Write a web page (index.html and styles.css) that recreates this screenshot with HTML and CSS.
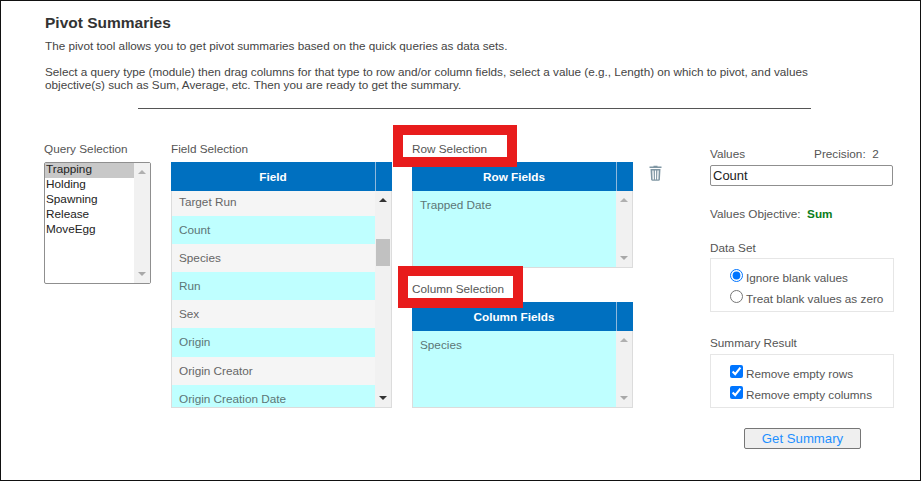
FILE: index.html
```html
<!DOCTYPE html>
<html lang="en">
<head>
<meta charset="utf-8">
<title>Pivot Summaries</title>
<link rel="stylesheet" href="styles.css">
</head>
<body>
<main class="frame">
  <section class="intro">
    <h1 class="title">Pivot Summaries</h1>
    <p class="text lead">The pivot tool allows you to get pivot summaries based on the quick queries as data sets.</p>
    <p class="text">Select a query type (module) then drag columns for that type to row and/or column fields, select a value (e.g., Length) on which to pivot, and values<br>objective(s) such as Sum, Average, etc. Then you are ready to get the summary.</p>
    <div class="rule"></div>
  </section>

  <section class="columns">
    <div class="col-query">
      <div class="label">Query Selection</div>
      <div class="listbox">
        <div class="listbox-items">
          <div class="option selected">Trapping</div>
          <div class="option">Holding</div>
          <div class="option">Spawning</div>
          <div class="option">Release</div>
          <div class="option">MoveEgg</div>
        </div>
        <div class="scrollbar">
          <span class="arrow up faint"></span>
          <span class="arrow down faint"></span>
        </div>
      </div>
    </div>

    <div class="col-field">
      <div class="label">Field Selection</div>
      <div class="panel">
        <div class="panel-head"><div class="head-title">Field</div><div class="head-end"></div></div>
        <div class="panel-body tall">
          <div class="rows">
            <div class="row grey">Target Run</div>
            <div class="row cyan">Count</div>
            <div class="row grey">Species</div>
            <div class="row cyan">Run</div>
            <div class="row grey">Sex</div>
            <div class="row cyan">Origin</div>
            <div class="row grey">Origin Creator</div>
            <div class="row cyan">Origin Creation Date</div>
          </div>
          <div class="scrollbar field-bar">
            <span class="arrow up"></span>
            <span class="thumb"></span>
            <span class="arrow down"></span>
          </div>
        </div>
      </div>
    </div>

    <div class="col-drop">
      <div class="label">Row Selection</div>
      <div class="panel">
        <div class="panel-head"><div class="head-title">Row Fields</div><div class="head-end"></div></div>
        <div class="panel-body short">
          <div class="drop-area">Trapped Date</div>
          <div class="scrollbar"><span class="arrow up faint"></span><span class="arrow down faint"></span></div>
        </div>
      </div>
      <div class="label second">Column Selection</div>
      <div class="panel">
        <div class="panel-head"><div class="head-title">Column Fields</div><div class="head-end"></div></div>
        <div class="panel-body short">
          <div class="drop-area">Species</div>
          <div class="scrollbar"><span class="arrow up faint"></span><span class="arrow down faint"></span></div>
        </div>
      </div>
      <div class="callout callout-row"></div>
      <div class="callout callout-col"></div>
    </div>

    <div class="col-trash">
      <svg class="trash" width="13" height="16" viewBox="0 0 13 16" aria-label="Delete">
        <path d="M4.500 1.600V.7h4v.9h4v1.500H.5V1.600z" fill="#7f96a3"/>
        <path d="M1.500 4h10l-.6 10.600c0 .8-.5 1.200-1.200 1.200H3.300c-.7 0-1.200-.4-1.200-1.200zM3.300 5.500l.3 8.900h1.300L4.600 5.500zM5.900 5.500v8.900h1.200V5.500zM8.400 5.500l-.3 8.900h1.300l.3-8.900z" fill="#7f96a3" fill-rule="evenodd"/>
      </svg>
    </div>

    <div class="col-right">
      <div class="values-head"><span>Values</span><span>Precision:&nbsp; 2</span></div>
      <input class="value-input" type="text" value="Count">
      <div class="objective">Values Objective:&nbsp; <b class="sum">Sum</b></div>
      <div class="label-r data-label">Data Set</div>
      <div class="optbox">
        <label class="opt"><input type="radio" name="ds" checked><span>Ignore blank values</span></label>
        <label class="opt"><input type="radio" name="ds"><span>Treat blank values as zero</span></label>
      </div>
      <div class="label-r summary-label">Summary Result</div>
      <div class="optbox">
        <label class="opt"><input type="checkbox" checked><span>Remove empty rows</span></label>
        <label class="opt"><input type="checkbox" checked><span>Remove empty columns</span></label>
      </div>
      <div class="actions"><button class="summary-btn" type="button">Get Summary</button></div>
    </div>
  </section>
</main>
</body>
</html>
```
FILE: styles.css
```css
* { box-sizing: border-box; }
html, body { margin: 0; padding: 0; background: #fff; }
body { font-family: "Liberation Sans", Arial, sans-serif; font-size: 11.750px; color: #555; }

.frame {
  width: 921px;
  height: 481px;
  border: 1px solid #111;
  padding: 13px 0 0 43px;
  overflow: hidden;
}

.intro { padding-left: 1px; }
.title { margin: 0 0 7px; font-size: 15.500px; line-height: 18px; font-weight: bold; color: #333; }
.text { margin: 0; font-size: 11.720px; line-height: 13px; color: #444; }
.lead { margin-bottom: 13px; }
.rule { width: 673px; height: 1px; margin: 17px 0 0 93px; background: #555; }

.columns { display: flex; align-items: flex-start; margin-top: 33px; }

.label { height: 20px; line-height: 14px; color: #555; }
.col-query { width: 107px; margin-right: 20px; }
.col-field { width: 221px; margin-right: 20px; }
.col-drop { position: relative; width: 221px; margin-right: 16px; }
.col-trash { width: 13px; padding-top: 23px; margin-right: 48px; }
.col-right { width: 184px; padding-top: 5px; }
.trash { display: block; }

.listbox {
  display: flex;
  height: 122px;
  border: 1px solid #8f8f8f;
  border-radius: 2px;
  background: #fff;
}
.listbox-items { flex: 1; }
.option { height: 15px; line-height: 12px; padding-left: 1px; color: #222; }
.selected { background: #c8c8c8; }

.scrollbar {
  display: flex;
  flex-direction: column;
  justify-content: space-between;
  align-items: center;
  width: 16px;
  padding: 7px 0;
  background: #f1f1f1;
  flex: none;
}
.arrow { width: 0; height: 0; border-left: 4px solid transparent; border-right: 4px solid transparent; }
.arrow.up { border-bottom: 4px solid #333; }
.arrow.down { border-top: 4px solid #333; }
.arrow.up.faint { border-bottom-color: #b0b0b0; }
.arrow.down.faint { border-top-color: #a8a8a8; }
.field-bar { position: relative; }
.thumb { position: absolute; left: 1px; top: 48px; width: 14px; height: 27px; background: #c1c1c1; }

.panel { border: 1px solid #dcdcdc; border-top: 0; }
.panel-head { display: flex; height: 29px; margin: 0 -1px; background: #0070c0; color: #fff; font-weight: bold; }
.head-title { flex: 1; text-align: center; line-height: 30px; border-right: 1px solid #8fb8dc; }
.head-end { width: 16px; }
.panel-body { display: flex; overflow: hidden; }
.tall { height: 216px; }
.short { height: 76px; }
.rows { flex: 1; margin-top: -3px; }
.row { height: 28.100px; line-height: 28px; padding-left: 7px; color: #666; }
.grey { background: #f5f5f5; }
.cyan { background: #bfffff; color: #5c7676; }
.drop-area { flex: 1; padding: 7px 0 0 7px; line-height: 14px; background: #bfffff; color: #5c7676; }

.second { margin-top: 14px; }
.callout { position: absolute; border: 10px solid #e81c1c; pointer-events: none; }
.callout-row { left: -19px; top: -17px; width: 124px; height: 42px; }
.callout-col { left: -14px; top: 124px; width: 125px; height: 42px; }

.values-head { display: flex; height: 14px; line-height: 14px; }
.values-head span:last-child { margin-left: 69px; }
.value-input {
  display: block;
  width: 183px;
  height: 21px;
  margin-top: 4px;
  padding: 0 2px;
  border: 1px solid #8f8f8f;
  border-radius: 2px;
  font-family: inherit;
  font-size: 13px;
  color: #222;
}
.objective { height: 14px; line-height: 14px; margin-top: 21px; }
.sum { color: #0a7d20; }
.label-r { height: 14px; line-height: 14px; }
.data-label { margin-top: 20px; margin-bottom: 3px; }
.summary-label { margin-top: 24px; margin-bottom: 4px; }
.optbox {
  display: flex;
  flex-direction: column;
  gap: 7px;
  height: 54px;
  padding: 11px 0 0 19px;
  border: 1px solid #e6e6e6;
}
.opt { display: flex; align-items: center; height: 14px; white-space: nowrap; }
.opt input { width: 13px; height: 13px; margin: 0 3px 0 0; position: relative; top: -2px; }
.actions { margin-top: 20px; padding-left: 34px; }
.summary-btn {
  display: block;
  width: 117px;
  height: 21px;
  padding: 0;
  background: #efefef;
  border: 1px solid #767676;
  border-radius: 2px;
  font-family: inherit;
  font-size: 13.200px;
  color: #1e90ff;
}
```
